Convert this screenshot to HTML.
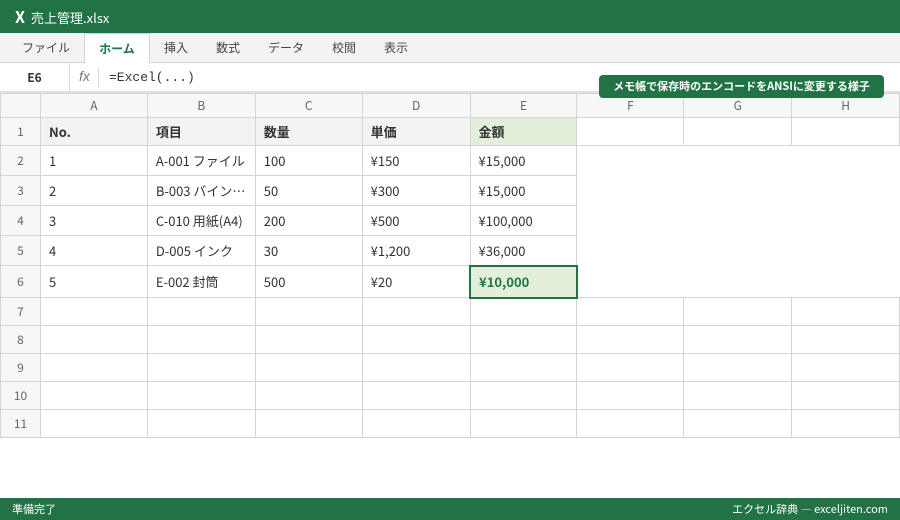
<!DOCTYPE html>
<html><head><meta charset="utf-8"><style>
*{margin:0;padding:0;box-sizing:border-box}
body{width:900px;height:520px;position:relative;background:#fff;font-family:"Liberation Sans","Noto Sans CJK JP",sans-serif;overflow:hidden;color:#333}
.jp{font-family:"Noto Sans CJK JP","Liberation Sans",sans-serif}
#title{position:absolute;left:0;top:0;width:900px;height:33px;background:#217346;color:#fff;font-size:13px;line-height:33px;padding-left:15px}
#title b{font-size:16px;margin-right:6px}
#tabs{position:absolute;top:33px;left:0;width:900px;height:30px;background:#f3f3f3;border-bottom:1px solid #d4d4d4}
.tab{position:absolute;top:0;height:30px;line-height:30px;font-size:12px;color:#444;text-align:center}
.tab.act{background:#fff;border:1px solid #d4d4d4;border-bottom:1px solid #fff;color:#217346;font-weight:bold;height:31px}
#fb{position:absolute;top:63px;left:0;width:900px;height:30px;border-bottom:2px solid #e0e0e0}
#grid{position:absolute;top:93px;left:0;border-collapse:collapse;table-layout:fixed}
#grid td{border:1px solid #d4d4d4;font-size:13px;padding-left:8px;white-space:nowrap;overflow:hidden}
#grid tr.h td{background:#f7f7f7;text-align:center;color:#666;font-size:12px;padding:0}
#grid td.rh{background:#f7f7f7;text-align:center;color:#666;font-size:12px;padding:0}
#grid td.n{border:none}
.b{font-weight:bold}
#status{position:absolute;left:0;top:498px;width:900px;height:22px;background:#217346;color:#fff;font-size:11px;line-height:22px;padding:0 12px}
#tip{position:absolute;left:599px;top:75px;width:285px;height:23px;background:#217346;color:#fff;font-size:11px;font-weight:bold;line-height:23px;text-align:center;border-radius:4px}
</style></head><body class="jp">
<div id="title"><b>X</b>売上管理.xlsx</div>
<div id="tabs">
<div class="tab" style="left:10px;width:72px">ファイル</div>
<div class="tab act" style="left:84px;width:66px">ホーム</div>
<div class="tab" style="left:150px;width:52px">挿入</div>
<div class="tab" style="left:202px;width:52px">数式</div>
<div class="tab" style="left:254px;width:64px">データ</div>
<div class="tab" style="left:318px;width:52px">校閲</div>
<div class="tab" style="left:370px;width:52px">表示</div>
</div>
<div id="fb">
<div style="position:absolute;left:0;top:0;width:70px;height:28px;line-height:30px;text-align:center;font-size:12px;font-weight:bold;border-right:1px solid #ddd">E6</div>
<div style="position:absolute;left:79px;top:5px;font-size:14px;font-style:italic;color:#777;font-family:'Liberation Sans',sans-serif">fx</div>
<div style="position:absolute;left:98px;top:5px;width:1px;height:20px;background:#ddd"></div>
<div style="position:absolute;left:109px;top:7px;font-size:13px;font-family:'Liberation Mono',monospace">=Excel(...)</div>
</div>
<table id="grid">
<colgroup><col style="width:40px"><col style="width:107px"><col style="width:108px"><col style="width:107px"><col style="width:108px"><col style="width:107px"><col style="width:107px"><col style="width:108px"><col style="width:108px"></colgroup>
<tr class="h" style="height:24px"><td></td><td>A</td><td>B</td><td>C</td><td>D</td><td>E</td><td>F</td><td>G</td><td>H</td></tr>
<tr style="height:28px"><td class="rh">1</td><td class="b" style="background:#f3f3f3">No.</td><td class="b" style="background:#f3f3f3">項目</td><td class="b" style="background:#f3f3f3">数量</td><td class="b" style="background:#f3f3f3">単価</td><td class="b" style="background:#e2efda">金額</td><td></td><td></td><td></td></tr>
<tr style="height:30px"><td class="rh">2</td><td>1</td><td>A-001 ファイル</td><td>100</td><td>¥150</td><td>¥15,000</td><td class="n"></td><td class="n"></td><td class="n"></td></tr>
<tr style="height:30px"><td class="rh">3</td><td>2</td><td>B-003 バイン…</td><td>50</td><td>¥300</td><td>¥15,000</td><td class="n"></td><td class="n"></td><td class="n"></td></tr>
<tr style="height:30px"><td class="rh">4</td><td>3</td><td>C-010 用紙(A4)</td><td>200</td><td>¥500</td><td>¥100,000</td><td class="n"></td><td class="n"></td><td class="n"></td></tr>
<tr style="height:30px"><td class="rh">5</td><td>4</td><td>D-005 インク</td><td>30</td><td>¥1,200</td><td>¥36,000</td><td class="n"></td><td class="n"></td><td class="n"></td></tr>
<tr style="height:32px"><td class="rh">6</td><td>5</td><td>E-002 封筒</td><td>500</td><td>¥20</td><td class="b" style="background:#e2efda;color:#217346;border:2px solid #217346">¥10,000</td><td class="n"></td><td class="n"></td><td class="n"></td></tr>
<tr style="height:28px"><td class="rh">7</td><td></td><td></td><td></td><td></td><td></td><td></td><td></td><td></td></tr>
<tr style="height:28px"><td class="rh">8</td><td></td><td></td><td></td><td></td><td></td><td></td><td></td><td></td></tr>
<tr style="height:28px"><td class="rh">9</td><td></td><td></td><td></td><td></td><td></td><td></td><td></td><td></td></tr>
<tr style="height:28px"><td class="rh">10</td><td></td><td></td><td></td><td></td><td></td><td></td><td></td><td></td></tr>
<tr style="height:28px"><td class="rh">11</td><td></td><td></td><td></td><td></td><td></td><td></td><td></td><td></td></tr>
</table>
<div id="tip">メモ帳で保存時のエンコードをANSIに変更する様子</div>
<div id="status"><span>準備完了</span><span style="float:right">エクセル辞典 ― exceljiten.com</span></div>
</body></html>
